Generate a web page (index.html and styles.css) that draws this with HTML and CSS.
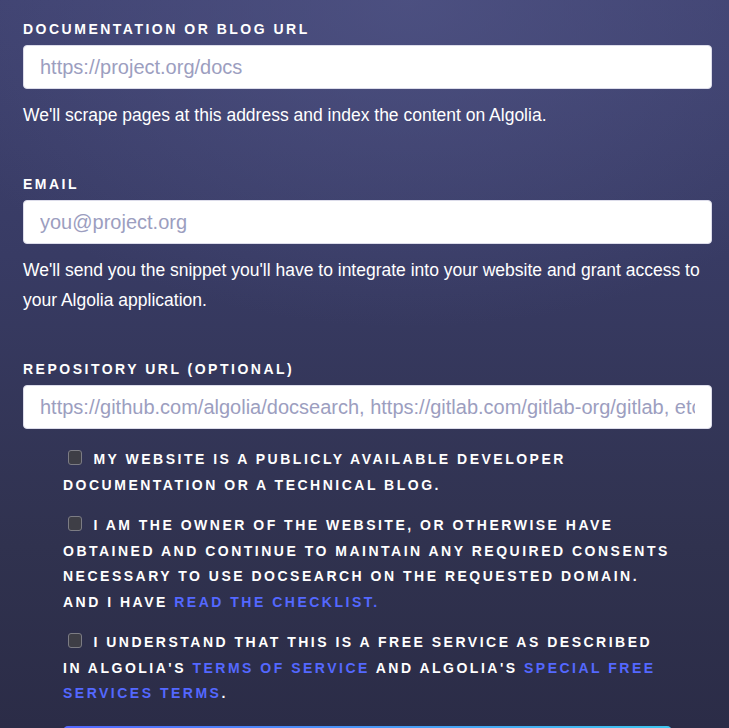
FILE: index.html
```html
<!DOCTYPE html>
<html lang="en">
<head>
<meta charset="utf-8">
<title>DocSearch application</title>
<link rel="stylesheet" href="styles.css">
</head>
<body>
<form class="form">
  <div class="field">
    <label class="label" for="url">DOCUMENTATION OR BLOG URL</label>
    <input class="input" id="url" type="text" placeholder="https://project.org/docs">
    <p class="help">We'll scrape pages at this address and index the content on Algolia.</p>
  </div>
  <div class="field">
    <label class="label" for="email">EMAIL</label>
    <input class="input" id="email" type="text" placeholder="you@project.org">
    <p class="help">We'll send you the snippet you'll have to integrate into your website and grant access to your Algolia application.</p>
  </div>
  <div class="field field-last">
    <label class="label" for="repo">REPOSITORY URL (OPTIONAL)</label>
    <input class="input" id="repo" type="text" placeholder="https://github.com/algolia/docsearch, https://gitlab.com/gitlab-org/gitlab, etc">
  </div>
  <div class="checks">
    <label class="check"><input class="box" type="checkbox"> MY WEBSITE IS A PUBLICLY AVAILABLE DEVELOPER DOCUMENTATION OR A TECHNICAL BLOG.</label>
    <label class="check"><input class="box" type="checkbox"> I AM THE OWNER OF THE WEBSITE, OR OTHERWISE HAVE OBTAINED AND CONTINUE TO MAINTAIN ANY REQUIRED CONSENTS NECESSARY TO USE DOCSEARCH ON THE REQUESTED DOMAIN. AND I HAVE <a class="link" href="#">READ THE CHECKLIST.</a></label>
    <label class="check"><input class="box" type="checkbox"> I UNDERSTAND THAT THIS IS A FREE SERVICE AS DESCRIBED IN ALGOLIA'S <a class="link" href="#">TERMS OF SERVICE</a> AND ALGOLIA'S <a class="link" href="#">SPECIAL FREE SERVICES TERMS</a>.</label>
    <button class="submit" type="button" aria-label="Join the program"></button>
  </div>
</form>
</body>
</html>
```
FILE: styles.css
```css
html, body {
  margin: 0;
  padding: 0;
  height: 100%;
}

body {
  font-family: "Liberation Sans", Arial, sans-serif;
  color: #ffffff;
  background-color: #2c2e4b;
  background-image:
    radial-gradient(ellipse 70% 45% at 56% 0%, rgba(80, 84, 134, 0.75) 0%, rgba(80, 84, 134, 0) 100%),
    linear-gradient(180deg, #3f4270 0%, #383b64 35%, #30324f 75%, #2b2c47 100%);
  overflow: hidden;
}

.form {
  padding: 21px 17px 0 23px;
}

.field {
  display: flex;
  flex-direction: column;
  margin-bottom: 46px;
}

.field-last {
  margin-bottom: 18px;
}

.label {
  font-size: 14px;
  font-weight: 700;
  line-height: 16px;
  letter-spacing: 2.5px;
  margin-bottom: 8px;
}

.input {
  box-sizing: border-box;
  height: 44px;
  width: 100%;
  margin: 0;
  padding: 0 16px;
  border: 1px solid #dcdcea;
  border-radius: 4px;
  background: #ffffff;
  font-family: "Liberation Sans", Arial, sans-serif;
  font-size: 20px;
  color: #3a3c66;
  outline: none;
}

.input::placeholder {
  color: #9c9ebf;
}

.help {
  margin: 11px 0 0 0;
  font-size: 17.5px;
  line-height: 30px;
}

.checks {
  display: flex;
  flex-direction: column;
  gap: 15px;
  margin: 0 40px;
}

.check {
  display: block;
  font-size: 14px;
  font-weight: 700;
  line-height: 25.5px;
  letter-spacing: 2.5px;
}

.box {
  -webkit-appearance: none;
  appearance: none;
  box-sizing: border-box;
  width: 14px;
  height: 15px;
  margin: 0 5px 0 5px;
  vertical-align: -1px;
  background: #3e3e46;
  border: 1.5px solid #7c7c84;
  border-radius: 3px;
}

.link {
  color: #5468ff;
  text-decoration: none;
}

.submit {
  display: block;
  margin-top: 4px;
  height: 48px;
  width: 100%;
  border: none;
  border-radius: 5px;
  background: linear-gradient(90deg, #5468ff 0%, #3fc7f0 100%);
}
```
